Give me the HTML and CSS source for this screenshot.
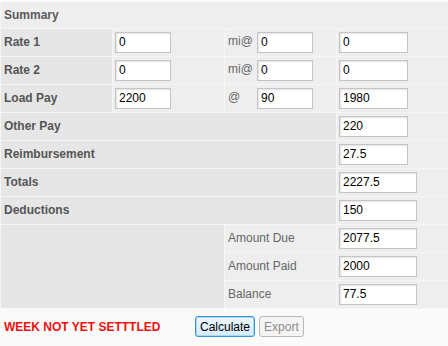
FILE: index.html
```html
<!DOCTYPE html>
<html>
<head>
<meta charset="utf-8">
<link rel="stylesheet" href="styles.css">
</head>
<body>
<div class="page">
  <table class="summary">
    <colgroup><col class="c"><col class="c"><col class="c"><col class="c"></colgroup>
    <tr class="head"><td colspan="4" class="title">Summary</td></tr>
    <tr>
      <td class="lbl">Rate 1</td>
      <td class="val"><input class="inp sm" value="0"></td>
      <td class="val"><span class="pre">mi@</span><input class="inp sm" value="0"></td>
      <td class="val"><input class="inp md" value="0"></td>
    </tr>
    <tr>
      <td class="lbl">Rate 2</td>
      <td class="val"><input class="inp sm" value="0"></td>
      <td class="val"><span class="pre">mi@</span><input class="inp sm" value="0"></td>
      <td class="val"><input class="inp md" value="0"></td>
    </tr>
    <tr>
      <td class="lbl">Load Pay</td>
      <td class="val"><input class="inp sm" value="2200"></td>
      <td class="val"><span class="pre">@</span><input class="inp sm" value="90"></td>
      <td class="val"><input class="inp md" value="1980"></td>
    </tr>
    <tr>
      <td class="lbl" colspan="3">Other Pay</td>
      <td class="val"><input class="inp md" value="220"></td>
    </tr>
    <tr>
      <td class="lbl" colspan="3">Reimbursement</td>
      <td class="val"><input class="inp md" value="27.5"></td>
    </tr>
    <tr>
      <td class="lbl" colspan="3">Totals</td>
      <td class="val"><input class="inp lg" value="2227.5"></td>
    </tr>
    <tr>
      <td class="lbl" colspan="3">Deductions</td>
      <td class="val"><input class="inp lg" value="150"></td>
    </tr>
    <tr>
      <td class="lbl" colspan="2" rowspan="3"></td>
      <td class="val sub">Amount Due</td>
      <td class="val"><input class="inp lg" value="2077.5"></td>
    </tr>
    <tr>
      <td class="val sub">Amount Paid</td>
      <td class="val"><input class="inp lg" value="2000"></td>
    </tr>
    <tr>
      <td class="val sub">Balance</td>
      <td class="val"><input class="inp lg" value="77.5"></td>
    </tr>
  </table>
  <div class="footer">
    <span class="msg">WEEK NOT YET SETTTLED</span>
    <button class="btn primary">Calculate</button>
    <button class="btn" disabled>Export</button>
  </div>
</div>
</body>
</html>
```

FILE: styles.css
```css
html, body {
  margin: 0;
  padding: 0;
  background: #fafafa;
}
.page {
  width: 448px;
  padding-top: 2px;
  font-family: "Liberation Sans", Arial, sans-serif;
  font-size: 12px;
}
.summary {
  width: 448px;
  border-collapse: collapse;
  table-layout: fixed;
}
.summary col.c { width: 112px; }
.summary td {
  border: 1px solid #f6f6f6;
  height: 28px;
  padding: 0 2px;
  vertical-align: middle;
  box-sizing: border-box;
}
.summary tr.head td {
  height: 26px;
  border-top: none;
  background: #eeeeee;
}
.summary td.title,
.summary td.lbl {
  padding-left: 3px;
}
.title {
  font-weight: bold;
  color: #5a5a5a;
}
.lbl {
  background: #e6e6e6;
  font-weight: bold;
  color: #555;
}
.val {
  background: #eeeeee;
  white-space: nowrap;
}
.summary td.sub {
  color: #666;
  padding-left: 3px;
}
.pre {
  display: inline-block;
  width: 29px;
  padding-left: 1px;
  color: #666;
}
.inp {
  box-sizing: border-box;
  height: 21px;
  border: 1px solid #c4c4c4;
  padding: 0 3px;
  font-family: "Liberation Sans", Arial, sans-serif;
  font-size: 12px;
  color: #000;
  background: #fff;
  box-shadow: inset 1px 1px 2px rgba(0,0,0,0.12);
  vertical-align: middle;
  outline: none;
}
.inp.sm { width: 56px; }
.inp.md { width: 69px; }
.inp.lg { width: 78px; }
.footer {
  display: flex;
  align-items: center;
  height: 36px;
  padding-left: 4px;
}
.msg {
  width: 191px;
  color: #ee1111;
  font-weight: bold;
}
.btn {
  height: 21px;
  padding: 0 4px;
  margin-right: 4px;
  font-family: "Liberation Sans", Arial, sans-serif;
  font-size: 12px;
  border-radius: 3px;
  border: 1px solid #adadad;
  background: linear-gradient(#f4f4f4, #e2e2e2);
  color: #000;
}
.btn.primary {
  border-color: #3c8fd0;
  box-shadow: inset 0 0 0 1px #a8d8f5;
  background: linear-gradient(#eef7fd, #d6ecfa);
}
.btn[disabled] {
  color: #8d8d8d;
  background: #f4f4f4;
  border-color: #b8b8b8;
}
```
